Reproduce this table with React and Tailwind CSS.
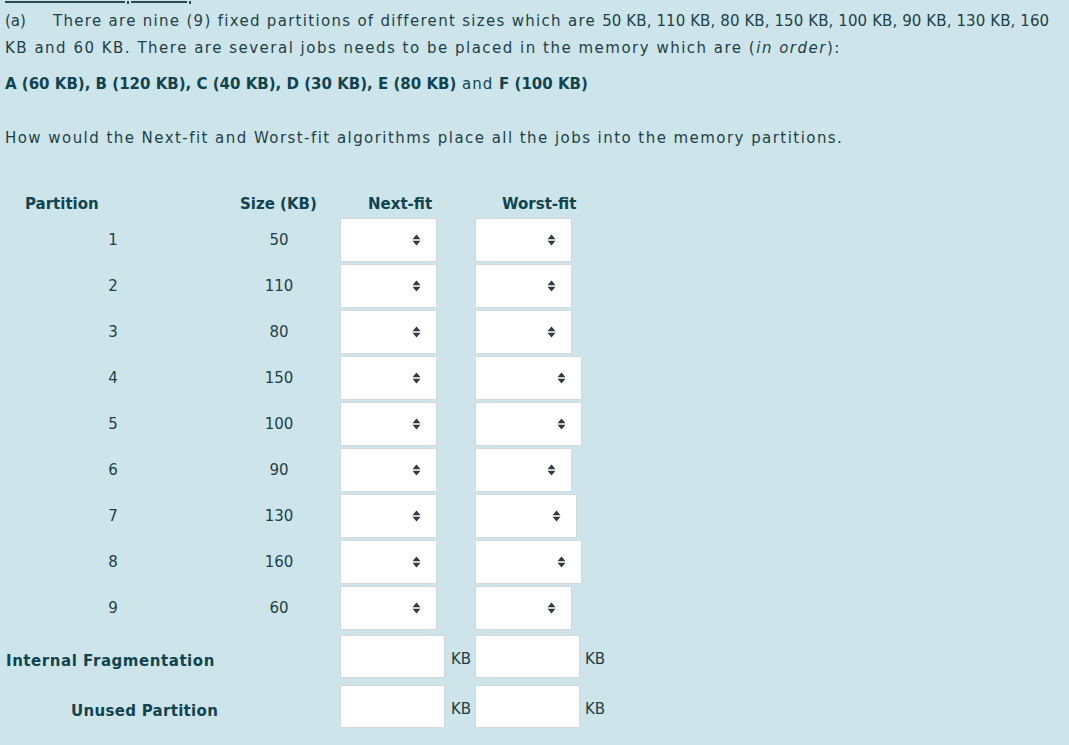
import React from "react";

const Caret = () => (
  <svg width="9" height="12" viewBox="0 0 9 12" className="block">
    <path d="M0.5 5.2 L4.5 0.6 L8.5 5.2 Z" fill="#343a40" />
    <path d="M0.5 6.8 L4.5 11.4 L8.5 6.8 Z" fill="#343a40" />
  </svg>
);

const Select = ({ w }) => (
  <div
    className="h-[44px] bg-white border border-[#d6d9dc] flex items-center justify-end pr-[15px]"
    style={{ width: w }}
  >
    <Caret />
  </div>
);

const rows = [
  ["1", "50", 97],
  ["2", "110", 97],
  ["3", "80", 97],
  ["4", "150", 107],
  ["5", "100", 107],
  ["6", "90", 97],
  ["7", "130", 102],
  ["8", "160", 107],
  ["9", "60", 97],
];

export default function App() {
  return (
    <div
      className="w-full h-[745px] overflow-hidden bg-[#cde5ea] text-[#1e3f47] text-[15px]"
      style={{ fontFamily: "'DejaVu Sans', sans-serif" }}
    >
      {/* cut-off line at very top */}
      <div className="h-[8px] pl-[5px]">
        <div className="flex items-start gap-[2px] pt-[1px]">
          <div className="w-[120px] h-[2px] bg-[#2a4a52]" />
          <div className="w-[2px] h-[3px] bg-[#2a4a52]" />
          <div className="w-[56px] h-[2px] bg-[#2a4a52]" />
          <div className="w-[2px] h-[3px] bg-[#2a4a52]" />
        </div>
      </div>

      <div className="pl-[5px] leading-[27px] whitespace-nowrap">
        <div className="flex">
          <span className="inline-block w-[48px]">(a)</span>
          <span>
            <span className="tracking-[1.3px]">There are nine (9) fixed partitions of different sizes which are </span>
            <span className="tracking-[0.1px]">50 KB, 110 KB, 80 KB, 150 KB, 100 KB, 90 KB, 130 KB, 160</span>
          </span>
        </div>
        <div className="tracking-[1.5px]">
          KB and 60 KB. There are several jobs needs to be placed in the memory which are (<i>in order</i>):
        </div>
        <div className="mt-[9px] text-[#0f4450]">
          <span className="font-semibold">A (60 KB), B (120 KB), C (40 KB), D (30 KB), E (80 KB)</span>
          <span className="tracking-[1px]"> and </span>
          <span className="font-semibold">F (100 KB)</span>
        </div>
        <div className="mt-[27px] tracking-[1.45px]">
          How would the Next-fit and Worst-fit algorithms place all the jobs into the memory partitions.
        </div>
      </div>

      {/* table */}
      <div className="mt-[39px]">
        <div className="flex h-[27px] items-center font-semibold text-[#0f4450] leading-[27px]">
          <div className="w-[226px] pl-[25px]">Partition</div>
          <div className="w-[114px] pl-[14px]">Size (KB)</div>
          <div className="w-[135px] pl-[28px]">Next-fit</div>
          <div className="pl-[27px]">Worst-fit</div>
        </div>

        <div className="flex flex-col gap-[2px]">
          {rows.map(([p, s, w]) => (
            <div key={p} className="flex items-center h-[44px] text-[#1e3f47]">
              <div className="w-[226px] text-center">{p}</div>
              <div className="w-[106px] text-center">{s}</div>
              <div className="ml-[8px]">
                <Select w={97} />
              </div>
              <div className="ml-[38px]">
                <Select w={w} />
              </div>
            </div>
          ))}
        </div>

        <div className="flex items-center h-[43px] mt-[5px]">
          <div className="w-[340px] pl-[6px] font-semibold tracking-[0.55px] text-[#0f4450] pt-[10px]">Internal Fragmentation</div>
          <div className="w-[105px] h-[43px] bg-white border border-[#d6d9dc]" />
          <div className="w-[30px] pl-[6px] text-[#1e3f47] pt-[6px]">KB</div>
          <div className="w-[105px] h-[43px] bg-white border border-[#d6d9dc]" />
          <div className="pl-[5px] text-[#1e3f47] pt-[6px]">KB</div>
        </div>

        <div className="flex items-center h-[43px] mt-[7px]">
          <div className="w-[340px] pl-[71px] font-semibold tracking-[0.3px] text-[#0f4450] pt-[10px]">Unused Partition</div>
          <div className="w-[105px] h-[43px] bg-white border border-[#d6d9dc]" />
          <div className="w-[30px] pl-[6px] text-[#1e3f47] pt-[6px]">KB</div>
          <div className="w-[105px] h-[43px] bg-white border border-[#d6d9dc]" />
          <div className="pl-[5px] text-[#1e3f47] pt-[6px]">KB</div>
        </div>
      </div>
    </div>
  );
}
